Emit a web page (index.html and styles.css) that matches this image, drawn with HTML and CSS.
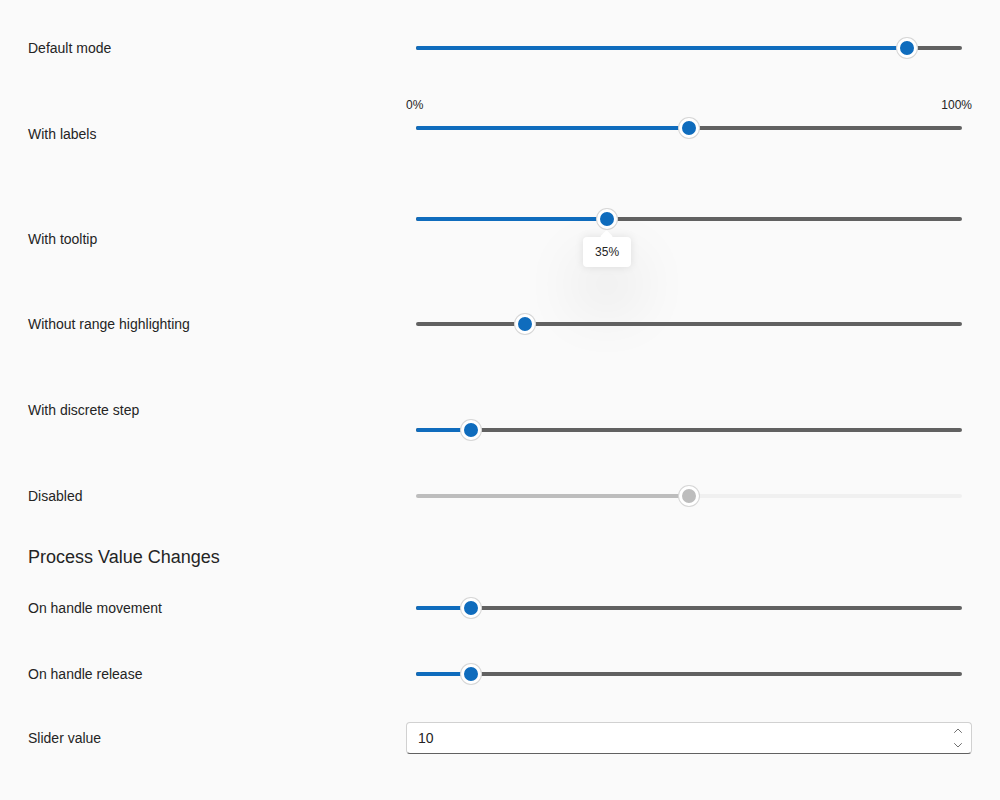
FILE: index.html
```html
<!DOCTYPE html>
<html lang="en">
<head>
<meta charset="utf-8">
<title>Slider</title>
<link rel="stylesheet" href="styles.css">
</head>
<body>
<main class="page">
  <div class="row r1">
    <div class="label">Default mode</div>
    <div class="cell">
      <div class="slider"><div class="track"><div class="fill" style="width:90%"></div><div class="thumb" style="left:90%"></div></div></div>
    </div>
  </div>

  <div class="row r2">
    <div class="label">With labels</div>
    <div class="cell">
      <div class="marks"><span>0%</span><span>100%</span></div>
      <div class="slider"><div class="track"><div class="fill" style="width:50%"></div><div class="thumb" style="left:50%"></div></div></div>
    </div>
  </div>

  <div class="row r3">
    <div class="label">With tooltip</div>
    <div class="cell">
      <div class="slider"><div class="track"><div class="fill" style="width:35%"></div><div class="thumb" style="left:35%"><div class="tooltip">35%</div></div></div></div>
    </div>
  </div>

  <div class="row r4">
    <div class="label">Without range highlighting</div>
    <div class="cell">
      <div class="slider"><div class="track"><div class="thumb" style="left:20%"></div></div></div>
    </div>
  </div>

  <div class="row r5">
    <div class="label">With discrete step</div>
    <div class="cell">
      <div class="slider"><div class="track"><div class="fill" style="width:10%"></div><div class="thumb" style="left:10%"></div></div></div>
    </div>
  </div>

  <div class="row r6">
    <div class="label">Disabled</div>
    <div class="cell">
      <div class="slider disabled"><div class="track"><div class="fill" style="width:50%"></div><div class="thumb" style="left:50%"></div></div></div>
    </div>
  </div>

  <h2 class="heading">Process Value Changes</h2>

  <div class="row r7">
    <div class="label">On handle movement</div>
    <div class="cell">
      <div class="slider"><div class="track"><div class="fill" style="width:10%"></div><div class="thumb" style="left:10%"></div></div></div>
    </div>
  </div>

  <div class="row r8">
    <div class="label">On handle release</div>
    <div class="cell">
      <div class="slider"><div class="track"><div class="fill" style="width:10%"></div><div class="thumb" style="left:10%"></div></div></div>
    </div>
  </div>

  <div class="row r9">
    <div class="label">Slider value</div>
    <div class="cell">
      <div class="input">
        <span class="value">10</span>
        <span class="spin">
          <svg width="10" height="8" viewBox="0 0 10 8"><path d="M1.5 5.5 L5 2 L8.5 5.5" fill="none" stroke="#707070" stroke-width="1" stroke-linecap="round" stroke-linejoin="round"/></svg>
          <svg width="10" height="8" viewBox="0 0 10 8"><path d="M1.5 2.5 L5 6 L8.5 2.5" fill="none" stroke="#707070" stroke-width="1" stroke-linecap="round" stroke-linejoin="round"/></svg>
        </span>
      </div>
    </div>
  </div>
</main>
</body>
</html>
```
FILE: styles.css
```css
html, body {
  margin: 0;
  padding: 0;
  background: #fafafa;
}
body {
  font-family: "Liberation Sans", Arial, sans-serif;
  color: #242424;
  font-size: 14px;
}
.page {
  padding: 18px 28px 0 28px;
  width: 944px;
}
.row {
  display: grid;
  grid-template-columns: 378px 566px;
  align-items: start;
}
.label {
  line-height: 20px;
  font-size: 14px;
}
.cell {
  position: relative;
}
.slider {
  height: 20px;
  padding: 0 10px;
  display: flex;
  align-items: center;
}
.track {
  position: relative;
  flex: 1;
  height: 4px;
  border-radius: 2px;
  background: #616161;
}
.fill {
  position: absolute;
  left: 0;
  top: 0;
  bottom: 0;
  background: #0f6cbd;
  border-radius: 2px;
}
.thumb {
  position: absolute;
  top: 2px;
  width: 14px;
  height: 14px;
  margin: -10px 0 0 -10px;
  border-radius: 50%;
  background: #0f6cbd;
  border: 3px solid #ffffff;
  box-shadow: 0 0 0 1px #d6d6d6;
}
.disabled .track { background: #f0f0f0; }
.disabled .fill { background: #bdbdbd; }
.disabled .thumb { background: #bdbdbd; }

.marks {
  display: flex;
  justify-content: space-between;
  font-size: 12px;
  line-height: 14px;
  margin-bottom: 6px;
}
.tooltip {
  position: absolute;
  top: 25px;
  left: 50%;
  transform: translateX(-50%);
  width: 48px;
  height: 30px;
  line-height: 30px;
  text-align: center;
  font-size: 12px;
  background: #ffffff;
  border-radius: 4px;
  box-shadow: 0 0 8px rgba(0,0,0,0.10), 0 32px 64px rgba(0,0,0,0.16);
}
.tooltip::before {
  content: "";
  position: absolute;
  top: -5px;
  left: 50%;
  width: 9px;
  height: 9px;
  margin-left: -5px;
  background: #ffffff;
  transform: rotate(45deg);
  border-radius: 1px;
}

.r1 { height: 60px; }
.r1 .label, .r1 .cell { padding-top: 20px; }
.r2 { height: 90px; }
.r2 .label { padding-top: 46px; }
.r2 .cell { padding-top: 20px; }
.r3 { height: 113px; }
.r3 .label { padding-top: 61px; }
.r3 .cell { padding-top: 41px; }
.r4 { height: 90px; }
.r4 .label, .r4 .cell { padding-top: 33px; }
.r5 { height: 90px; }
.r5 .label { padding-top: 29px; }
.r5 .cell { padding-top: 49px; }
.r6 { height: 70px; }
.r6 .label, .r6 .cell { padding-top: 25px; }

.heading {
  margin: 0;
  padding-top: 14px;
  height: 36px;
  font-size: 18px;
  line-height: 24px;
  font-weight: normal;
}

.r7 { height: 60px; }
.r7 .label, .r7 .cell { padding-top: 17px; }
.r8 { height: 65px; }
.r8 .label, .r8 .cell { padding-top: 23px; }
.r9 { height: 65px; }
.r9 .label { padding-top: 22px; }
.r9 .cell { padding-top: 16px; }

.input {
  box-sizing: border-box;
  height: 32px;
  background: #ffffff;
  border: 1px solid #d1d1d1;
  border-bottom-color: #616161;
  border-radius: 4px;
  display: flex;
  align-items: center;
  padding-left: 11px;
  padding-right: 8px;
}
.value {
  flex: 1;
  font-size: 14px;
}
.spin {
  display: flex;
  flex-direction: column;
  gap: 6px;
}
.spin svg { display: block; }
```
